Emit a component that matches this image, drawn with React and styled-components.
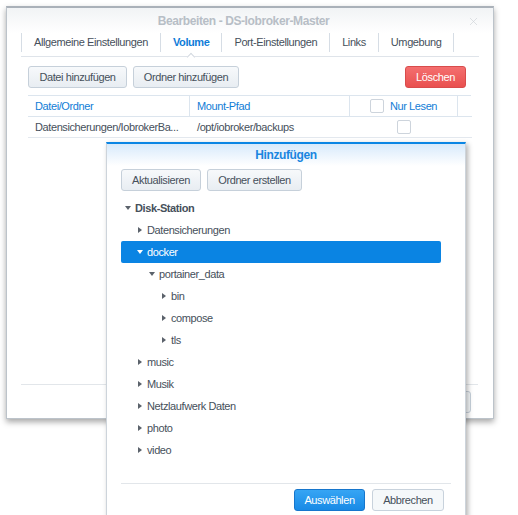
import React from 'react';
import styled, { createGlobalStyle, css } from 'styled-components';
import { X } from 'lucide-react';

const Global = createGlobalStyle`
  html, body { margin: 0; padding: 0; background: #fff; }
  body {
    font-family: "Liberation Sans", Arial, sans-serif;
    font-size: 11px;
    letter-spacing: -0.4px;
    color: #46505b;
  }
  * { box-sizing: border-box; }
`;

const Desk = styled.div`
  position: relative;
  width: 518px;
  height: 515px;
  overflow: hidden;
  padding: 6px 0 0 6px;
`;

/* ---------- outer window ---------- */

const Window = styled.div`
  width: 488px;
  height: 413px;
  background: #fff;
  border: 1px solid #bcc3ca;
  border-top: 2px solid #aab1b9;
  box-shadow: 0 3px 6px rgba(0, 0, 0, 0.35);
  display: flex;
  flex-direction: column;
`;

const TitleBar = styled.div`
  height: 25px;
  padding-top: 1px;
  display: grid;
  grid-template-columns: 1fr auto 1fr;
  align-items: center;
  padding-right: 13px;
  background: linear-gradient(#f1f3f5, #fff);
`;

const Title = styled.div`
  grid-column: 2;
  font-size: 12px;
  font-weight: bold;
  color: #b7bec6;
`;

const Close = styled.div`
  grid-column: 3;
  justify-self: end;
  display: flex;
  color: #cdd2d7;
`;

const TabBar = styled.div`
  margin: 0 14px;
  height: 24px;
  display: flex;
  align-items: flex-start;
  border-bottom: 1px solid #dfe4ea;
`;

const Tab = styled.div`
  position: relative;
  height: 19px;
  line-height: 19px;
  padding: 0 12px 0 12px;
  border-right: 1px solid #d6dde5;
  color: #46505b;
  white-space: nowrap;
  &:first-child { border-left: 1px solid #d6dde5; }
  ${p => p.$active && css`
    color: #0f7cd8;
    font-weight: bold;
    &::after {
      content: '';
      position: absolute;
      left: 50%;
      top: 21px;
      width: 5px;
      height: 5px;
      background: #fff;
      border-left: 1px solid #d3d9e0;
      border-top: 1px solid #d3d9e0;
      transform: translateX(-50%) rotate(45deg);
    }
  `}
`;

const Content = styled.div`
  flex: 1;
  padding: 9px 22px 0 21px;
  display: flex;
  flex-direction: column;
`;

const Toolbar = styled.div`
  display: flex;
  gap: 6px;
  padding-right: ${p => p.$inset || 0}px;
`;

const Spacer = styled.div`
  flex: 1;
`;

const Button = styled.button`
  height: 22px;
  padding: 0;
  font: inherit;
  letter-spacing: inherit;
  white-space: nowrap;
  border-radius: 3px;
  border: 1px solid #c6d0da;
  background: linear-gradient(#f7f9fb, #e8edf2);
  color: #46505b;
  width: ${p => p.$w}px;
  ${p => p.$kind === 'danger' && css`
    border-color: #d84c4c;
    background: linear-gradient(#f46f6f, #e9504f);
    color: #fff;
  `}
  ${p => p.$kind === 'primary' && css`
    border-color: #1676cc;
    background: linear-gradient(#36a5f4, #188ae6);
    color: #fff;
  `}
  ${p => p.$kind === 'plain' && css`
    background: #f5f8fa;
    border-color: #c8d2dc;
  `}
`;

const Table = styled.div`
  margin-top: 7px;
  display: grid;
  grid-template-columns: 162px 160px 108px 1fr;
  border-top: 1px solid #dce5ee;
`;

const HeadCell = styled.div`
  height: 21px;
  display: flex;
  align-items: center;
  justify-content: ${p => (p.$center ? 'center' : 'flex-start')};
  gap: 6px;
  padding: 0 7px;
  color: #117dd6;
  border-bottom: 1px solid #dce5ee;
  border-right: ${p => (p.$last ? 'none' : '1px solid #dce5ee')};
`;

const Cell = styled.div`
  height: 21px;
  display: flex;
  align-items: center;
  justify-content: ${p => (p.$center ? 'center' : 'flex-start')};
  padding: 0 7px;
  white-space: nowrap;
  overflow: hidden;
  border-bottom: 1px solid #e3e8ee;
`;

const Check = styled.span`
  width: 14px;
  height: 14px;
  border: 1px solid #cdd4dc;
  border-radius: 2px;
  background: #fff;
`;

const WindowFooter = styled.div`
  margin: 0 15px 5px 14px;
  padding: 6px 7px 0 0;
  border-top: 1px solid #e2e6ea;
  display: flex;
  justify-content: flex-end;
  gap: 6px;
`;

/* ---------- folder picker dialog ---------- */

const Picker = styled.div`
  position: absolute;
  left: 106px;
  top: 142px;
  width: 360px;
  height: 376px;
  background: #fff;
  border: 1px solid #cdd4db;
  border-top: 2px solid #0b86e4;
  box-shadow: 2px 2px 5px rgba(0, 0, 0, 0.3);
  display: flex;
  flex-direction: column;
`;

const PickerHead = styled.div`
  height: 22px;
  display: flex;
  align-items: center;
  justify-content: center;
  font-size: 12px;
  font-weight: bold;
  color: #1a86e0;
  background: linear-gradient(#d8eafb, #fff);
`;

const PickerBody = styled.div`
  flex: 1;
  padding: 3px 24px 0 14px;
  display: flex;
  flex-direction: column;
`;

const Tree = styled.div`
  margin-top: 6px;
  display: flex;
  flex-direction: column;
`;

const Node = styled.div`
  height: 22px;
  display: flex;
  align-items: center;
  padding-left: ${p => p.$depth * 12}px;
  border-radius: 2px;
  color: #46505b;
  white-space: nowrap;
  font-weight: ${p => (p.$bold ? 'bold' : 'normal')};
  ${p => p.$selected && css`
    background: #0a84e3;
    color: #fff;
  `}
`;

const CaretBox = styled.span`
  width: 14px;
  display: flex;
  justify-content: center;
  align-items: center;
`;

const Caret = styled.span`
  width: 0;
  height: 0;
  ${p => (p.$open
    ? css`
      border-left: 3px solid transparent;
      border-right: 3px solid transparent;
      border-top: 4px solid ${p.$light ? '#fff' : '#5b626b'};
    `
    : css`
      border-top: 3px solid transparent;
      border-bottom: 3px solid transparent;
      border-left: 4px solid ${p.$light ? '#fff' : '#5b626b'};
    `)}
`;

const PickerFooter = styled.div`
  margin: 0 14px 6px 14px;
  padding: 5px 7px 0 0;
  border-top: 1px solid #e2e6ea;
  display: flex;
  justify-content: flex-end;
  gap: 7px;
`;

const tabs = ['Allgemeine Einstellungen', 'Volume', 'Port-Einstellungen', 'Links', 'Umgebung'];

const folders = [
  { name: 'Disk-Station', depth: 0, open: true, bold: true },
  { name: 'Datensicherungen', depth: 1 },
  { name: 'docker', depth: 1, open: true, selected: true },
  { name: 'portainer_data', depth: 2, open: true },
  { name: 'bin', depth: 3 },
  { name: 'compose', depth: 3 },
  { name: 'tls', depth: 3 },
  { name: 'music', depth: 1 },
  { name: 'Musik', depth: 1 },
  { name: 'Netzlaufwerk Daten', depth: 1 },
  { name: 'photo', depth: 1 },
  { name: 'video', depth: 1 },
];

export default function App() {
  return (
    <Desk>
      <Global />
      <Window>
        <TitleBar>
          <Title>Bearbeiten - DS-Iobroker-Master</Title>
          <Close><X size={13} strokeWidth={1.2} /></Close>
        </TitleBar>
        <TabBar>
          {tabs.map(t => (
            <Tab key={t} $active={t === 'Volume'}>{t}</Tab>
          ))}
        </TabBar>
        <Content>
          <Toolbar $inset={5}>
            <Button $w={99}>Datei hinzufügen</Button>
            <Button $w={106}>Ordner hinzufügen</Button>
            <Spacer />
            <Button $kind="danger" $w={61}>Löschen</Button>
          </Toolbar>
          <Table>
            <HeadCell>Datei/Ordner</HeadCell>
            <HeadCell>Mount-Pfad</HeadCell>
            <HeadCell $center><Check />Nur Lesen</HeadCell>
            <HeadCell $last />
            <Cell>Datensicherungen/IobrokerBa...</Cell>
            <Cell>/opt/iobroker/backups</Cell>
            <Cell $center><Check /></Cell>
            <Cell />
          </Table>
        </Content>
        <WindowFooter>
          <Button $kind="plain" $w={70}>OK</Button>
          <Button $kind="plain" $w={72}>Abbrechen</Button>
        </WindowFooter>
      </Window>

      <Picker>
        <PickerHead>Hinzufügen</PickerHead>
        <PickerBody>
          <Toolbar>
            <Button $w={80}>Aktualisieren</Button>
            <Button $w={95}>Ordner erstellen</Button>
          </Toolbar>
          <Tree>
            {folders.map(f => (
              <Node key={f.name} $depth={f.depth} $bold={f.bold} $selected={f.selected}>
                <CaretBox><Caret $open={f.open} $light={f.selected} /></CaretBox>
                {f.name}
              </Node>
            ))}
          </Tree>
        </PickerBody>
        <PickerFooter>
          <Button $kind="primary" $w={71}>Auswählen</Button>
          <Button $kind="plain" $w={72}>Abbrechen</Button>
        </PickerFooter>
      </Picker>
    </Desk>
  );
}
